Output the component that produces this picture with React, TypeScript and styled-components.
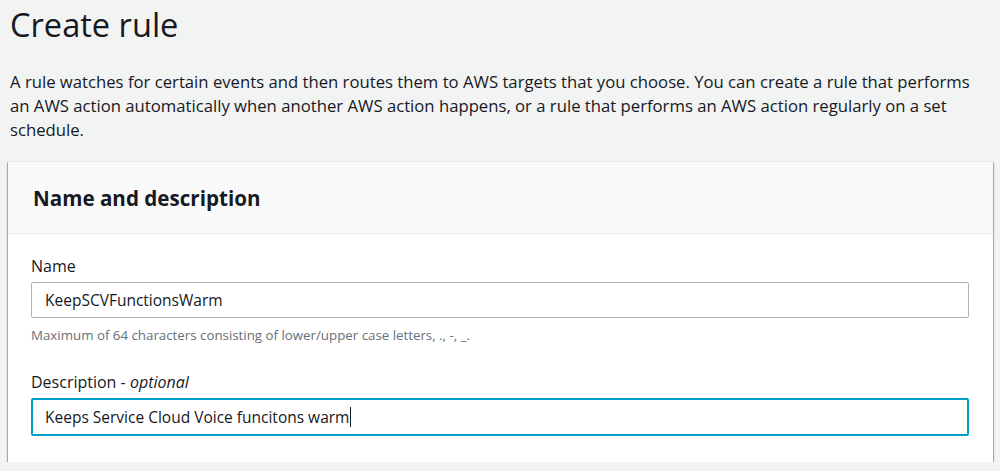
import styled, { createGlobalStyle } from 'styled-components'

const GlobalStyle = createGlobalStyle`
  html, body {
    margin: 0;
    padding: 0;
    background: #f2f3f3;
    color: #16191f;
    font-family: "Open Sans", "Noto Sans", Arial, sans-serif;
  }
`

const Page = styled.div`
  padding: 0 7px 0 8px;
  display: flex;
  flex-direction: column;
`

const Title = styled.h1`
  margin: 5px 0 0 2px;
  font-size: 32.6px;
  line-height: 40px;
  font-weight: 400;
`

const Intro = styled.p`
  margin: 25px 0 0 2px;
  font-size: 16.7px;
  line-height: 24px;
`

const Card = styled.section`
  margin-top: 20px;
  background: #fff;
  box-shadow: 0 1px 1px 0 rgba(0, 28, 36, 0.45), 1px 1px 1px 0 rgba(0, 28, 36, 0.25),
    -1px 1px 1px 0 rgba(0, 28, 36, 0.25), 0 0 0 1px rgba(0, 28, 36, 0.04);
`

const CardHeader = styled.div`
  background: #fafafa;
  border-bottom: 1px solid #eaeded;
  height: 71px;
  display: flex;
  align-items: center;
  padding: 0 25px;
`

const CardTitle = styled.h2`
  margin: 0;
  font-size: 20.6px;
  font-weight: 700;
`

const CardBody = styled.div`
  padding: 20px 24px 26px 23px;
  display: flex;
  flex-direction: column;
  gap: 26px;
`

const Field = styled.div`
  display: flex;
  flex-direction: column;
`

const Label = styled.label`
  font-size: 16px;
  line-height: 24px;
  margin-bottom: 4px;

  em {
    font-style: italic;
  }
`

const Input = styled.div<{ focused?: boolean }>`
  box-sizing: border-box;
  display: flex;
  align-items: center;
  font-size: 15.5px;
  border-radius: 2px;
  border: ${({ focused }) => (focused ? '2px solid #00a1c9' : '1px solid #aab7b8')};
  padding-left: ${({ focused }) => (focused ? '12px' : '13px')};
  height: ${({ focused }) => (focused ? '38px' : '36px')};
`

const Caret = styled.span`
  display: inline-block;
  width: 1px;
  height: 20px;
  background: #16191f;
  margin-left: 1px;
`

const Hint = styled.div`
  margin-top: 8px;
  font-size: 13.3px;
  line-height: 18px;
  color: #687078;
`

export default function App() {
  return (
    <>
      <GlobalStyle />
      <Page>
        <Title>Create rule</Title>
        <Intro>
          A rule watches for certain events and then routes them to AWS targets that you choose. You can create a
          rule that performs an AWS action automatically when another AWS action happens, or a rule that performs an
          AWS action regularly on a set schedule.
        </Intro>
        <Card>
          <CardHeader>
            <CardTitle>Name and description</CardTitle>
          </CardHeader>
          <CardBody>
            <Field>
              <Label>Name</Label>
              <Input>KeepSCVFunctionsWarm</Input>
              <Hint>Maximum of 64 characters consisting of lower/upper case letters, ., -, _.</Hint>
            </Field>
            <Field>
              <Label>
                Description - <em>optional</em>
              </Label>
              <Input focused>
                Keeps Service Cloud Voice funcitons warm
                <Caret />
              </Input>
            </Field>
          </CardBody>
        </Card>
      </Page>
    </>
  )
}
